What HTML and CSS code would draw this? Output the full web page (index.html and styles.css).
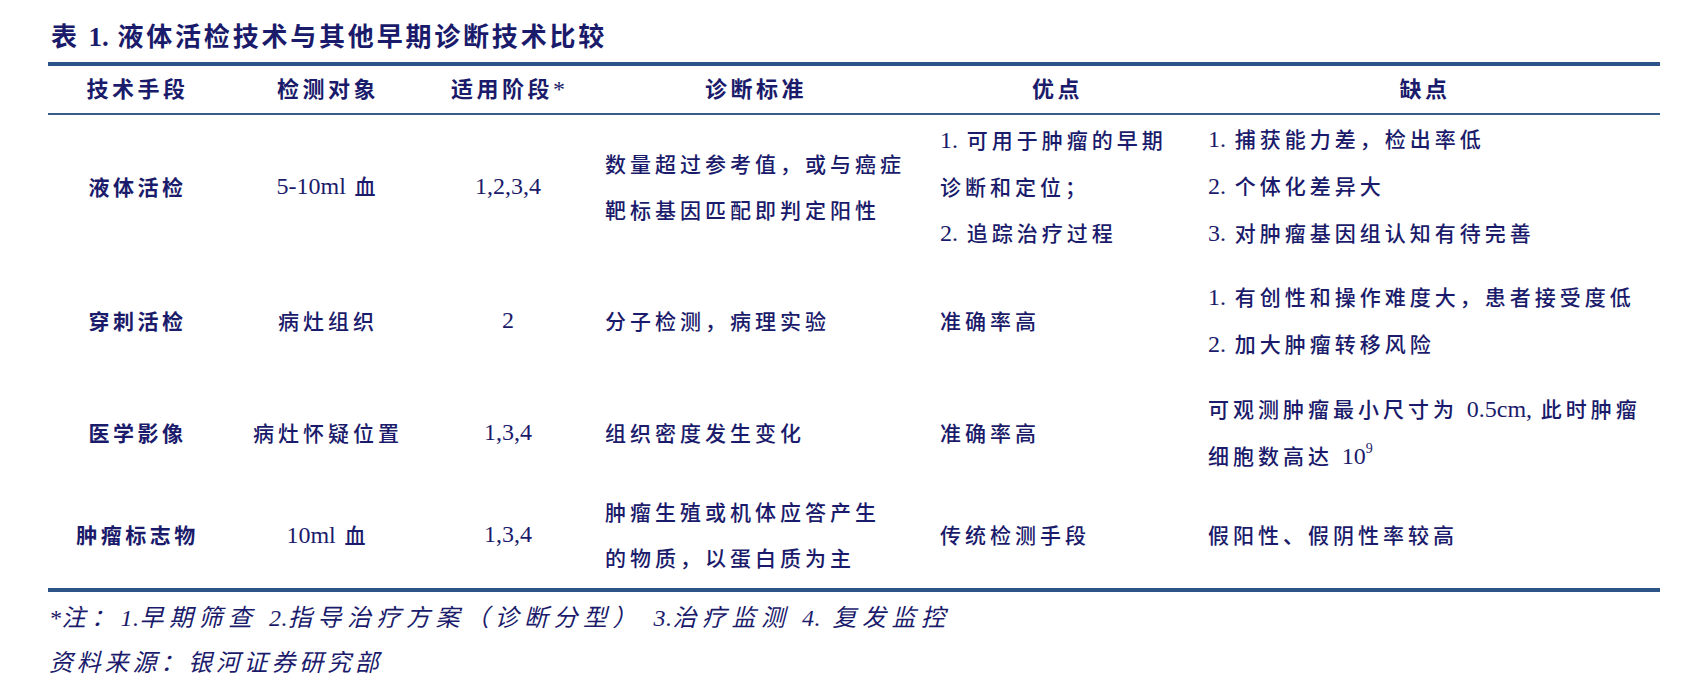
FILE: index.html
```html
<!DOCTYPE html>
<html lang="zh-CN">
<head>
<meta charset="utf-8">
<title>表 1. 液体活检技术与其他早期诊断技术比较</title>
<link rel="stylesheet" href="styles.css">
</head>
<body>
<div class="page">
  <h1 class="title"><span class="tlabel">表</span> <span class="tnum">1.</span> 液体活检技术与其他早期诊断技术比较</h1>
  <table class="cmp">
    <colgroup>
      <col class="c1"><col class="c2"><col class="c3"><col class="c4"><col class="c5"><col class="c6">
    </colgroup>
    <thead>
      <tr>
        <th>技术手段</th>
        <th>检测对象</th>
        <th>适用阶段<span class="lat">*</span></th>
        <th>诊断标准</th>
        <th>优点</th>
        <th>缺点</th>
      </tr>
    </thead>
    <tbody>
      <tr class="r1">
        <td class="name">液体活检</td>
        <td class="ctr"><span class="lat">5-10ml</span> 血</td>
        <td class="ctr lat">1,2,3,4</td>
        <td class="txt"><div>数量超过参考值，或与癌症</div><div>靶标基因匹配即判定阳性</div></td>
        <td class="txt tight"><div><span class="lat">1.</span> 可用于肿瘤的早期</div><div>诊断和定位；</div><div><span class="lat">2.</span> 追踪治疗过程</div></td>
        <td class="txt"><div><span class="lat">1.</span> 捕获能力差，检出率低</div><div><span class="lat">2.</span> 个体化差异大</div><div><span class="lat">3.</span> 对肿瘤基因组认知有待完善</div></td>
      </tr>
      <tr class="r2">
        <td class="name">穿刺活检</td>
        <td class="ctr">病灶组织</td>
        <td class="ctr lat">2</td>
        <td class="txt"><div>分子检测，病理实验</div></td>
        <td class="txt tight"><div>准确率高</div></td>
        <td class="txt"><div><span class="lat">1.</span> 有创性和操作难度大，患者接受度低</div><div><span class="lat">2.</span> 加大肿瘤转移风险</div></td>
      </tr>
      <tr class="r3">
        <td class="name">医学影像</td>
        <td class="ctr">病灶怀疑位置</td>
        <td class="ctr lat">1,3,4</td>
        <td class="txt"><div>组织密度发生变化</div></td>
        <td class="txt tight"><div>准确率高</div></td>
        <td class="txt"><div>可观测肿瘤最小尺寸为 <span class="lat">0.5cm,</span> 此时肿瘤</div><div>细胞数高达 <span class="lat">10<sup>9</sup></span></div></td>
      </tr>
      <tr class="r4">
        <td class="name">肿瘤标志物</td>
        <td class="ctr"><span class="lat">10ml</span> 血</td>
        <td class="ctr lat">1,3,4</td>
        <td class="txt"><div>肿瘤生殖或机体应答产生</div><div>的物质，以蛋白质为主</div></td>
        <td class="txt tight"><div>传统检测手段</div></td>
        <td class="txt"><div>假阳性、假阴性率较高</div></td>
      </tr>
    </tbody>
  </table>
  <p class="note"><span class="d">*</span>注：<span class="d">1.</span>早期筛查 <span class="d">2.</span>指导治疗方案（诊断分型） <span class="d">3.</span>治疗监测 <span class="d">4.</span> 复发监控</p>
  <p class="source">资料来源：银河证券研究部</p>
</div>
</body>
</html>
```

FILE: styles.css
```css
html, body {
  margin: 0;
  padding: 0;
  background: #ffffff;
}

body {
  font-family: "Liberation Serif", "Noto Sans CJK SC", serif;
  color: #1b1b6b;
}

.page {
  padding: 19px 0 0 48px;
  width: 1612px;
}

.title {
  margin: 0 0 9px 3px;
  font-size: 26px;
  line-height: 32px;
  font-weight: bold;
  letter-spacing: 2.8px;
  white-space: nowrap;
  font-family: "Noto Sans CJK SC", sans-serif;
}

.title .tnum {
  font-family: "Liberation Serif", serif;
  font-size: 27px;
  letter-spacing: 0;
}

.cmp {
  border-collapse: collapse;
  table-layout: fixed;
  width: 1612px;
  border-top: 4px solid #2d5486;
  border-bottom: 4px solid #2d5486;
}

.c1 { width: 179px; }
.c2 { width: 202px; }
.c3 { width: 158px; }
.c4 { width: 338px; }
.c5 { width: 265px; }
.c6 { width: 470px; }

.cmp th {
  height: 41px;
  padding: 0 0 6px 0;
  font-family: "Noto Sans CJK SC", sans-serif;
  font-size: 22px;
  font-weight: bold;
  letter-spacing: 3.5px;
  text-align: center;
  vertical-align: middle;
  border-bottom: 2px solid #3a5c88;
  white-space: nowrap;
}

.cmp th .lat {
  font-family: "Liberation Serif", serif;
  letter-spacing: 0;
}

.cmp td {
  padding: 0;
  vertical-align: middle;
  font-size: 21px;
  font-weight: 500;
  line-height: 46px;
  white-space: nowrap;
  font-family: "Noto Sans CJK SC", sans-serif;
  letter-spacing: 4px;
}

.cmp .lat {
  font-family: "Liberation Serif", serif;
  font-size: 24px;
  font-weight: normal;
  letter-spacing: 0;
}

.cmp td.name {
  text-align: center;
  font-weight: bold;
  letter-spacing: 3.5px;
}

.cmp td.ctr {
  text-align: center;
}

.cmp td.txt {
  padding-left: 18px;
}

.cmp td.tight {
  padding-left: 15px;
}

.cmp sup {
  font-size: 14px;
  line-height: 0;
  vertical-align: 11px;
}

.r1 { height: 140px; }
.r2 { height: 128px; }
.r3 { height: 96px; }
.r4 { height: 110px; }

.note,
.source {
  margin: 0 0 0 1px;
  font-family: "Liberation Serif", "Noto Sans CJK SC", serif;
  font-style: italic;
  font-size: 24px;
  line-height: 32px;
  white-space: nowrap;
}

.note {
  margin-top: 10px;
  letter-spacing: 5.5px;
}

.note .d {
  letter-spacing: 0.5px;
}

.source {
  margin-top: 13px;
  letter-spacing: 3.8px;
}
```
